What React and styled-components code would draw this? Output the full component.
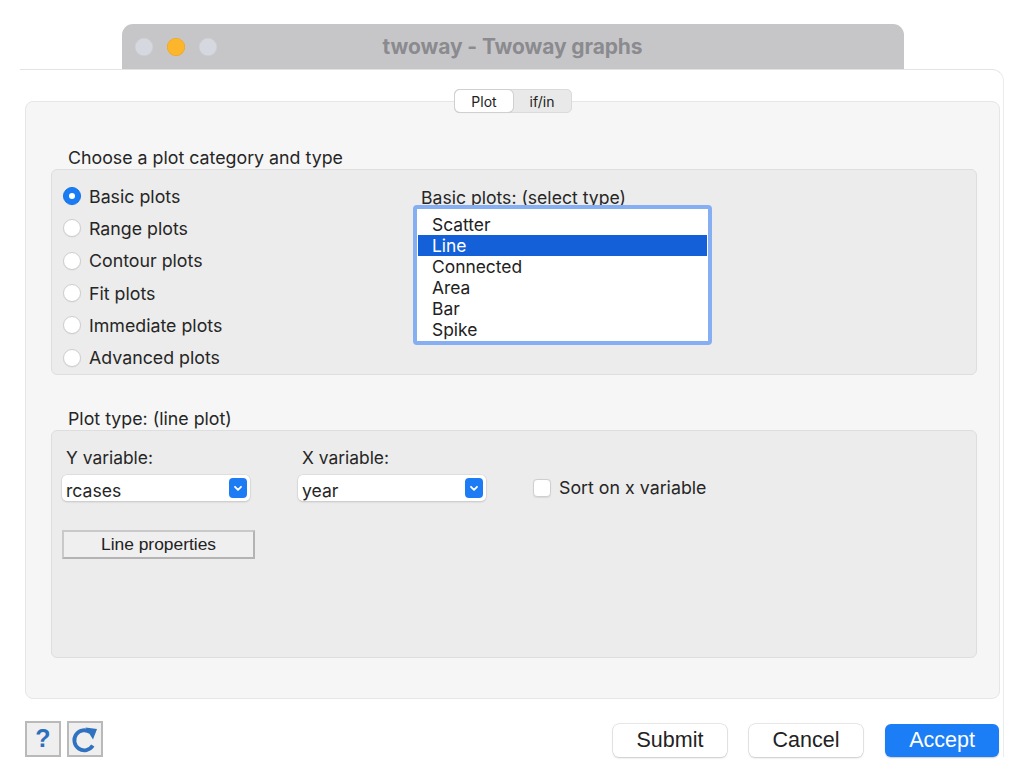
import React from "react"
import styled, { createGlobalStyle } from "styled-components"

const Global = createGlobalStyle`
  body {
    margin: 0;
    background: #ffffff;
    font-family: Inter, "Noto Sans", sans-serif;
    color: #262626;
  }
`

const Page = styled.div`
  width: 1020px;
  height: 778px;
  padding-top: 24px;
  box-sizing: border-box;
`

const TitleBar = styled.div`
  margin-left: 122px;
  width: 782px;
  height: 45px;
  background: #c6c6c9;
  border-radius: 11px 11px 0 0;
  display: flex;
  align-items: center;
`

const Lights = styled.div`
  display: flex;
  gap: 14px;
  padding-left: 13px;
`

const Light = styled.span`
  width: 18px;
  height: 18px;
  border-radius: 50%;
  background: ${(p) => (p.active ? "#fdb62c" : "#d6d8df")};
  box-shadow: inset 0 0 0 0.5px ${(p) => (p.active ? "#e9a21c" : "#c9cbd2")};
`

const Title = styled.div`
  flex: 1;
  text-align: center;
  margin-right: 96px;
  font-size: 21px;
  font-weight: 700;
  color: #8b8b8f;
  letter-spacing: -0.1px;
`

const Dialog = styled.div`
  margin-left: 20px;
  width: 984px;
  border-top: 1px solid #e3e3e3;
  border-right: 1px solid #ececec;
  border-radius: 0 12px 0 0;
  padding: 19px 4px 0 5px;
  box-sizing: border-box;
`

const Tabs = styled.div`
  display: flex;
  justify-content: center;
  margin-left: 2px;
  margin-bottom: -12px;
  position: relative;
  z-index: 1;
`

const TabGroup = styled.div`
  display: flex;
  background: #e9e9e9;
  border: 1px solid #dadada;
  border-radius: 5px;
  height: 22px;
`

const Tab = styled.div`
  width: ${(p) => p.w}px;
  display: flex;
  align-items: center;
  justify-content: center;
  font-size: 14px;
  color: #222;
  border-radius: 5px;
  background: ${(p) => (p.selected ? "#ffffff" : "transparent")};
  box-shadow: ${(p) => (p.selected ? "0 0 0 1px #d0d0d0, 0 1px 1px rgba(0,0,0,0.12)" : "none")};
`

const Panel = styled.div`
  width: 975px;
  height: 598px;
  box-sizing: border-box;
  background: #f6f6f6;
  border: 1px solid #e6e6e6;
  border-radius: 8px;
  padding: 46px 22px 0 25px;
`

const SectionLabel = styled.div`
  font-size: 17.8px;
  line-height: 20px;
  margin-left: 17px;
  margin-top: ${(p) => p.top || 0}px;
  margin-bottom: 1px;
`

const Group = styled.div`
  background: #ececec;
  border: 1px solid #dedede;
  border-radius: 6px;
  height: ${(p) => p.h}px;
  box-sizing: border-box;
`

const CategoryGroup = styled(Group)`
  display: flex;
  padding: 10px 0 0 11px;
`

const RadioList = styled.div`
  width: 350px;
  display: flex;
  flex-direction: column;
`

const RadioRow = styled.label`
  display: flex;
  align-items: center;
  height: 32.4px;
  gap: 8px;
  font-size: 17.8px;
`

const RadioCircle = styled.span`
  width: 18px;
  height: 18px;
  border-radius: 50%;
  box-sizing: border-box;
  display: flex;
  align-items: center;
  justify-content: center;
  background: ${(p) => (p.checked ? "#1a7cf5" : "#ffffff")};
  border: 1px solid ${(p) => (p.checked ? "#1672e6" : "#cfcfcf")};
  box-shadow: 0 0.5px 1px rgba(0, 0, 0, 0.08);
  &::after {
    content: "";
    display: ${(p) => (p.checked ? "block" : "none")};
    width: 6px;
    height: 6px;
    border-radius: 50%;
    background: #fff;
  }
`

const TypeColumn = styled.div`
  display: flex;
  flex-direction: column;
  padding-top: 9px;
`

const TypeLabel = styled.div`
  font-size: 17.6px;
  line-height: 18px;
  margin-left: 8px;
  margin-bottom: -2px;
`

const ListBox = styled.div`
  width: 299px;
  height: 140px;
  box-sizing: border-box;
  border: 4px solid #86aef2;
  border-radius: 4px;
  background: #ffffff;
  padding-top: 5px;
`

const ListItem = styled.div`
  height: 21px;
  line-height: 21px;
  padding-left: 14px;
  margin: 0 1px;
  font-size: 17.4px;
  color: ${(p) => (p.selected ? "#ffffff" : "#222")};
  background: ${(p) => (p.selected ? "#1460d8" : "transparent")};
`

const TypeGroup = styled(Group)`
  padding: 17px 0 0 10px;
`

const VarRow = styled.div`
  display: flex;
  align-items: flex-end;
  gap: 48px;
`

const Field = styled.div`
  display: flex;
  flex-direction: column;
  gap: 7px;
`

const FieldLabel = styled.div`
  font-size: 17.4px;
  line-height: 20px;
  margin-left: 4px;
`

const Select = styled.div`
  width: 188px;
  height: 26px;
  box-sizing: border-box;
  background: #ffffff;
  border-radius: 5px;
  box-shadow: 0 0 0 0.5px #d2d2d2, 0 1px 2px rgba(0, 0, 0, 0.18);
  display: flex;
  align-items: center;
  justify-content: space-between;
  padding: 0 3px 0 4px;
  font-size: 17.6px;
`

const SelectText = styled.span`
  padding-top: 4px;
`

const SelectArrow = styled.span`
  width: 18px;
  height: 20px;
  border-radius: 4px;
  background: #1d7cf4;
  display: flex;
  align-items: center;
  justify-content: center;
`

const CheckRow = styled.label`
  display: flex;
  align-items: center;
  gap: 8px;
  font-size: 17.8px;
  margin-bottom: 3px;
  margin-left: -1px;
`

const CheckBox = styled.span`
  width: 18px;
  height: 18px;
  box-sizing: border-box;
  border-radius: 4px;
  background: #ffffff;
  border: 1px solid #cfcfcf;
  box-shadow: 0 0.5px 1px rgba(0, 0, 0, 0.08);
`

const PropsButton = styled.div`
  margin-top: 29px;
  width: 193px;
  height: 29px;
  box-sizing: border-box;
  border: 2px solid #b3b3b3;
  border-top-color: #c9c9c9;
  border-left-color: #c9c9c9;
  background: #efefef;
  display: flex;
  align-items: center;
  justify-content: center;
  font-family: "Liberation Sans", Arial, sans-serif;
  font-size: 17.4px;
  color: #222;
`

const Footer = styled.div`
  display: flex;
  align-items: center;
  justify-content: space-between;
  margin-top: 21px;
`

const IconButtons = styled.div`
  display: flex;
  gap: 6px;
`

const IconButton = styled.div`
  width: 36px;
  height: 36px;
  box-sizing: border-box;
  border: 2px solid #b9b9b9;
  background: #efefef;
  display: flex;
  align-items: center;
  justify-content: center;
  font-family: "Liberation Sans", Arial, sans-serif;
  font-size: 25px;
  font-weight: 700;
  color: #2d6fbd;
`

const Actions = styled.div`
  display: flex;
  gap: 22px;
  margin-top: 4px;
`

const ActionButton = styled.div`
  width: 114px;
  height: 33px;
  box-sizing: border-box;
  border-radius: 6px;
  display: flex;
  align-items: center;
  justify-content: center;
  font-family: "Liberation Sans", Arial, sans-serif;
  font-size: 21.5px;
  background: ${(p) => (p.primary ? "#1b7ef6" : "#ffffff")};
  color: ${(p) => (p.primary ? "#ffffff" : "#222")};
  box-shadow: ${(p) =>
    p.primary
      ? "0 1px 1.5px rgba(0,0,0,0.2)"
      : "0 0 0 0.5px #d0d0d0, 0 1px 2px rgba(0,0,0,0.2)"};
`

const Chevron = () => (
  <svg width="10" height="7" viewBox="0 0 10 7">
    <path d="M2 1.8 L5 4.8 L8 1.8" fill="none" stroke="#fff" strokeWidth="1.8" strokeLinecap="round" strokeLinejoin="round" />
  </svg>
)

const RefreshIcon = () => (
  <svg width="32" height="32" viewBox="0 0 32 32">
    <path d="M21.4 9.3 A10 10 0 1 0 23.8 22.6" fill="none" stroke="#2f72c0" strokeWidth="3.8" />
    <polygon points="16.5,4.5 28,6 24,16.5" fill="#2f72c0" />
  </svg>
)

const categories = [
  "Basic plots",
  "Range plots",
  "Contour plots",
  "Fit plots",
  "Immediate plots",
  "Advanced plots",
]

const types = ["Scatter", "Line", "Connected", "Area", "Bar", "Spike"]

export default function App() {
  return (
    <Page>
      <Global />
      <TitleBar>
        <Lights>
          <Light />
          <Light active />
          <Light />
        </Lights>
        <Title>twoway - Twoway graphs</Title>
      </TitleBar>
      <Dialog>
        <Tabs>
          <TabGroup>
            <Tab w={58} selected>Plot</Tab>
            <Tab w={58}>if/in</Tab>
          </TabGroup>
        </Tabs>
        <Panel>
          <SectionLabel>Choose a plot category and type</SectionLabel>
          <CategoryGroup h={206}>
            <RadioList>
              {categories.map((c, i) => (
                <RadioRow key={c}>
                  <RadioCircle checked={i === 0} />
                  {c}
                </RadioRow>
              ))}
            </RadioList>
            <TypeColumn>
              <TypeLabel>Basic plots: (select type)</TypeLabel>
              <ListBox>
                {types.map((t) => (
                  <ListItem key={t} selected={t === "Line"}>
                    {t}
                  </ListItem>
                ))}
              </ListBox>
            </TypeColumn>
          </CategoryGroup>
          <SectionLabel top={34}>Plot type: (line plot)</SectionLabel>
          <TypeGroup h={228}>
            <VarRow>
              <Field>
                <FieldLabel>Y variable:</FieldLabel>
                <Select>
                  <SelectText>rcases</SelectText>
                  <SelectArrow><Chevron /></SelectArrow>
                </Select>
              </Field>
              <Field>
                <FieldLabel>X variable:</FieldLabel>
                <Select>
                  <SelectText>year</SelectText>
                  <SelectArrow><Chevron /></SelectArrow>
                </Select>
              </Field>
              <CheckRow>
                <CheckBox />
                Sort on x variable
              </CheckRow>
            </VarRow>
            <PropsButton>Line properties</PropsButton>
          </TypeGroup>
        </Panel>
        <Footer>
          <IconButtons>
            <IconButton>?</IconButton>
            <IconButton><RefreshIcon /></IconButton>
          </IconButtons>
          <Actions>
            <ActionButton>Submit</ActionButton>
            <ActionButton>Cancel</ActionButton>
            <ActionButton primary>Accept</ActionButton>
          </Actions>
        </Footer>
      </Dialog>
    </Page>
  )
}
